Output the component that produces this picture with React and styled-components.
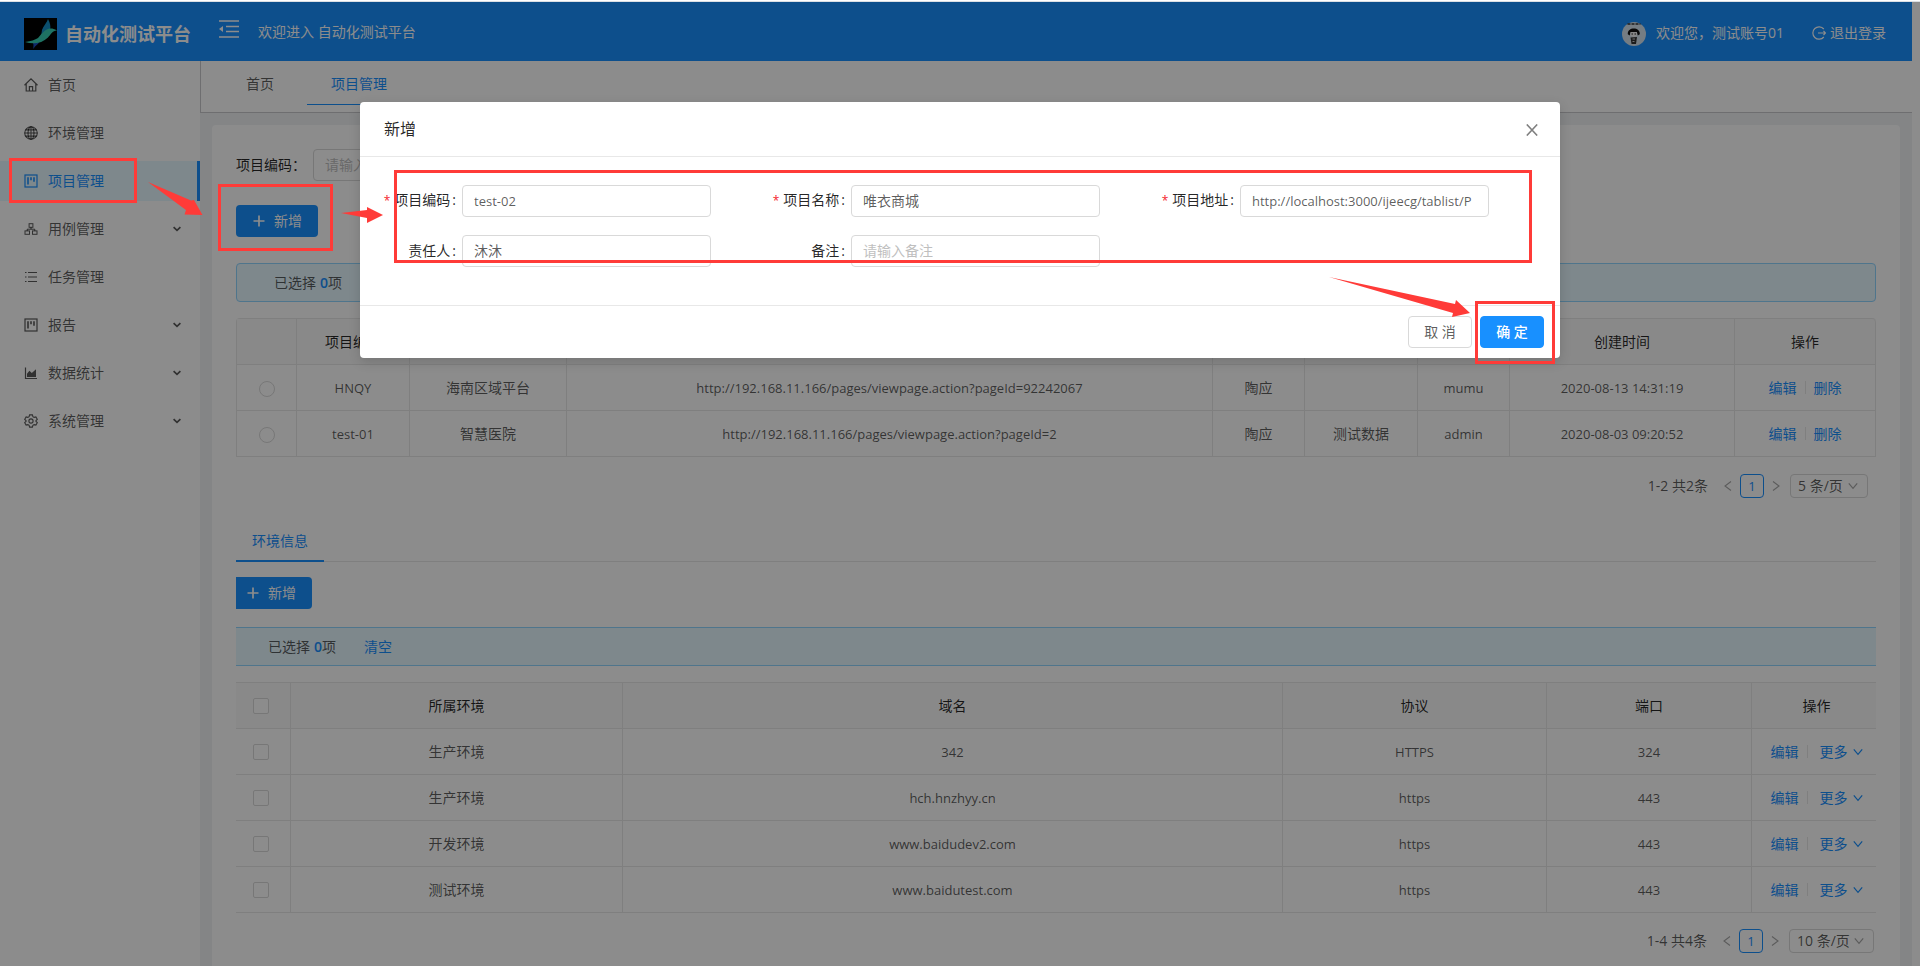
import React from "react";
import styled, { createGlobalStyle, css } from "styled-components";

const Global = createGlobalStyle`
  * { box-sizing: border-box; }
  body {
    margin: 0;
    font-family: "Open Sans", "Noto Sans CJK SC", sans-serif;
    font-size: 14px;
    line-height: 22px;
    color: rgba(0, 0, 0, 0.65);
    background: #fff;
  }
  button, input, select { font: inherit; color: inherit; margin: 0; }
  a { color: #1890ff; text-decoration: none; }
`;

const Root = styled.div`
  height: 100vh;
  overflow: hidden;
  display: flex;
  flex-direction: column;
`;
const TopEdge = styled.div`
  flex: none;
  height: 2px;
  background: #fff;
  border-bottom: 1px solid #dcdfe3;
`;
const Page = styled.div`
  position: relative;
  flex: 1;
  min-height: 0;
  padding-right: 8px;
  display: flex;
  flex-direction: column;
`;
const Mask = styled.div`
  position: absolute;
  inset: 0;
  background: rgba(0, 0, 0, 0.45);
`;

const Header = styled.header`
  flex: none;
  height: 59px;
  display: flex;
  align-items: center;
  padding: 4px 26px 0 24px;
  background: #1890ff;
  color: #fff;
`;
const Brand = styled.h1`
  margin: 0 28px 0 8px;
  font-size: 18px;
  line-height: 32px;
  font-weight: 700;
`;
const FoldButton = styled.button`
  border: 0;
  padding: 0;
  background: none;
  height: 30px;
  display: flex;
  align-items: flex-start;
`;
const Welcome = styled.span`
  flex: 1;
  margin-left: 19px;
  padding-bottom: 4px;
`;
const Account = styled.span`
  display: flex;
  align-items: center;
  gap: 10px;
  margin-right: 28px;
`;
const HeaderText = styled.span`
  padding-bottom: 2px;
`;
const Logout = styled.a`
  display: flex;
  align-items: center;
  gap: 4px;
  padding-bottom: 2px;
  color: #fff;
`;

const Columns = styled.div`
  flex: 1;
  min-height: 0;
  display: flex;
`;
const Sidebar = styled.nav`
  flex: none;
  width: 200px;
  background: #fff;
  padding-top: 4px;
  display: flex;
  flex-direction: column;
  gap: 8px;
`;
const NavItem = styled.a`
  height: 40px;
  display: flex;
  align-items: center;
  padding: 0 16px 0 24px;
  border-right: 3px solid transparent;
  color: rgba(0, 0, 0, 0.65);
  ${(p) => p.$active && css`
    color: #1890ff;
    background: #e6f7ff;
    border-right-color: #1890ff;
  `}
  svg { flex: none; }
`;
const NavText = styled.span`
  flex: 1;
  margin-left: 10px;
`;

const Main = styled.main`
  flex: 1;
  min-width: 0;
  display: flex;
  flex-direction: column;
  background: #f0f2f5;
`;
const PageTabs = styled.div`
  flex: none;
  height: 52px;
  display: flex;
  gap: 9px;
  padding-left: 21px;
  background: #fff;
  border-left: 1px solid #c8c8cc;
  border-bottom: 1px solid #c8c8cc;
`;
const PageTab = styled.a`
  height: 44px;
  padding: 12px 24px 0;
  color: ${(p) => (p.$active ? "#1890ff" : "rgba(0,0,0,.65)")};
  border-bottom: 1px solid ${(p) => (p.$active ? "#1890ff" : "transparent")};
`;
const Card = styled.section`
  flex: 1;
  margin: 12px 12px 0;
  padding: 24px 24px 0;
  background: #fff;
  border-radius: 4px 4px 0 0;
`;
const SearchRow = styled.div`
  display: flex;
  align-items: center;
  gap: 7px;
  margin-bottom: 24px;
  color: rgba(0, 0, 0, 0.85);
`;
const TextInput = styled.input`
  width: 249px;
  height: 32px;
  padding: 3px 11px 5px;
  border: 1px solid #d9d9d9;
  border-radius: 4px;
  background: #fff;
  color: rgba(0, 0, 0, 0.65);
  outline: none;
  &::placeholder { color: #bfbfbf; }
  ${(p) => p.$latin && css`
    padding: 4px 11px;
    font-size: 13px;
  `}
`;
const AddButton = styled.button`
  display: flex;
  align-items: center;
  gap: 8px;
  height: 32px;
  padding: 0 16px;
  padding-left: ${(p) => (p.$flush ? 10 : 16)}px;
  border: 0;
  border-radius: ${(p) => (p.$flush ? "0 4px 4px 0" : "4px")};
  background: #1890ff;
  color: #fff;
`;
const Notice = styled.div`
  height: 39px;
  display: flex;
  align-items: center;
  margin: ${(p) => (p.$flush ? 18 : 26)}px 0 16px;
  padding-left: ${(p) => (p.$flush ? 32 : 37)}px;
  background: #e6f7ff;
  border: 1px solid #91d5ff;
  border-radius: 4px;
  ${(p) => p.$flush && css`
    border-width: 1px 0;
    border-radius: 0;
  `}
  a { margin-left: 28px; }
`;
const Count = styled.b`
  font-weight: 600;
  color: #1890ff;
  margin-left: 4px;
`;

const DataTable = styled.table`
  width: 100%;
  table-layout: fixed;
  border-collapse: separate;
  border-spacing: 0;
  border: solid #e8e8e8;
  border-width: ${(p) => (p.$flush ? "1px 0 0 0" : "1px 0 0 1px")};
  border-radius: ${(p) => (p.$flush ? 0 : "4px 4px 0 0")};
  text-align: center;
  th, td {
    height: 46px;
    padding: 0;
    border: solid #e8e8e8;
    border-width: 0 1px 1px 0;
    font-weight: 400;
    vertical-align: middle;
  }
  th {
    background: #fafafa;
    color: rgba(0, 0, 0, 0.85);
  }
  ${(p) => p.$flush
    ? css`
      tr > :first-child { padding-right: 4px; }
      tr > :last-child { padding-left: 5px; border-right-width: 0; }
    `
    : css`th:last-child { border-top-right-radius: 4px; }`}
`;
const Latin = styled.span`
  font-size: 13px;
`;
const Radio = styled.input.attrs({ type: "radio" })`
  appearance: none;
  display: block;
  width: 16px;
  height: 16px;
  margin: 2px auto 0 !important;
  border: 1px solid #d9d9d9;
  border-radius: 50%;
  background: #fff;
`;
const Checkbox = styled.input.attrs({ type: "checkbox" })`
  appearance: none;
  display: block;
  width: 16px;
  height: 16px;
  margin: 0 auto !important;
  border: 1px solid #d9d9d9;
  border-radius: 2px;
  background: #fff;
`;
const Actions = styled.div`
  display: flex;
  align-items: center;
  justify-content: center;
`;
const Divider = styled.span`
  width: 1px;
  height: 13px;
  margin: 0 ${(p) => (p.$wide ? 12 : 8)}px 0 8px;
  background: #e8e8e8;
`;
const MoreLink = styled.a`
  display: flex;
  align-items: center;
  gap: 5px;
`;

const Pager = styled.div`
  display: flex;
  align-items: center;
  justify-content: flex-end;
  margin-top: ${(p) => (p.$flush ? 16 : 17)}px;
  padding-right: ${(p) => (p.$flush ? 2 : 8)}px;
  height: 24px;
`;
const PageArrow = styled.button`
  width: 24px;
  height: 24px;
  padding: 0;
  border: 0;
  background: none;
  color: rgba(0, 0, 0, 0.35);
  display: grid;
  place-items: center;
`;
const PagerTotal = styled.span`
  margin-right: 8px;
`;
const PageNumber = styled.button`
  width: 24px;
  height: 24px;
  padding: 0;
  border: 1px solid #1890ff;
  border-radius: 4px;
  background: #fff;
  color: #1890ff;
`;
const SizePicker = styled.label`
  display: flex;
  align-items: center;
  width: ${(p) => (p.$wide ? 85 : 78)}px;
  height: 24px;
  margin-left: 2px;
  padding: 0 9px 0 7px;
  border: 1px solid #d9d9d9;
  border-radius: 4px;
  color: rgba(0, 0, 0, 0.35);
  select {
    flex: 1;
    min-width: 0;
    appearance: none;
    border: 0;
    padding: 0;
    background: none;
    color: rgba(0, 0, 0, 0.65);
  }
`;
const SubTabs = styled.div`
  height: 42px;
  margin: 22px 0 15px;
  display: flex;
  border-bottom: 1px solid #e8e8e8;
`;
const SubTab = styled.a`
  height: 42px;
  padding: 10px 16px 0;
  border-bottom: 2px solid #1890ff;
`;

const Overlay = styled.div`
  position: absolute;
  inset: 100px 0 auto;
  display: flex;
  justify-content: center;
`;
const Modal = styled.div`
  position: relative;
  width: 1200px;
  background: #fff;
  border-radius: 4px;
  box-shadow: 0 4px 12px rgba(0, 0, 0, 0.15);
`;
const ModalHead = styled.div`
  height: 55px;
  display: flex;
  align-items: center;
  justify-content: space-between;
  padding: 0 22px 0 24px;
  border-bottom: 1px solid #e8e8e8;
  h2 {
    margin: 0;
    font-size: 16px;
    line-height: 22px;
    font-weight: 400;
    color: rgba(0, 0, 0, 0.85);
  }
`;
const CloseButton = styled.button`
  border: 0;
  padding: 2px 0 0;
  background: none;
  display: flex;
  color: rgba(0, 0, 0, 0.5);
`;
const Form = styled.form`
  display: grid;
  grid-template-columns: repeat(3, 1fr);
  row-gap: 18px;
  padding: 28px 21px 38px 12px;
`;
const Field = styled.label`
  display: flex;
  align-items: center;
  color: rgba(0, 0, 0, 0.85);
`;
const FieldName = styled.span`
  width: 90px;
  padding: 0 6px 1px 0;
  text-align: right;
  white-space: nowrap;
  &::after { content: ":"; margin-left: 2px; }
`;
const Star = styled.span`
  margin-right: 4px;
  font-size: 12px;
  color: #f5222d;
`;
const ModalFoot = styled.div`
  display: flex;
  justify-content: flex-end;
  gap: 8px;
  padding: 10px 16px;
  border-top: 1px solid #e8e8e8;
`;
const FootButton = styled.button`
  width: 64px;
  height: 32px;
  padding: 0;
  border: 1px solid ${(p) => (p.$primary ? "#1890ff" : "#d9d9d9")};
  border-radius: 4px;
  background: ${(p) => (p.$primary ? "#1890ff" : "#fff")};
  color: ${(p) => (p.$primary ? "#fff" : "rgba(0,0,0,.65)")};
  font-weight: ${(p) => (p.$primary ? 500 : 400)};
`;
const Notes = styled.svg`
  position: absolute;
  left: 0;
  top: 0;
  overflow: visible;
  pointer-events: none;
`;

const Icon = ({ size = 14, sw = 1.2, children }) => (
  <svg width={size} height={size} viewBox="0 0 14 14" fill="none" stroke="currentColor" strokeWidth={sw}>{children}</svg>
);
const icons = {
  home: <Icon><path d="M.5 7.300 7 .9l6.500 6.400M2.200 6V13h9.600V6M5.400 13V8.700h3.200V13" /></Icon>,
  globe: <Icon sw={1.1}><circle cx="7" cy="7" r="6.300" /><ellipse cx="7" cy="7" rx="3" ry="6.300" /><path d="M7 .7v12.600M.7 7h12.600M1.500 3.900h11M1.500 10.100h11" /></Icon>,
  project: <Icon><rect x="1" y="1" width="12" height="12" /><path d="M4 3.300v7.200M7 3.300v3M10 3.300v4.400" strokeWidth="1.600" /></Icon>,
  cluster: <Icon sw={1}><rect x="5.100" y="1.700" width="3.800" height="3.600" /><rect x="1" y="8.900" width="4.500" height="3.400" /><rect x="8.500" y="8.900" width="4.500" height="3.400" /><path d="M7 5.300v1.900M3.200 8.900V7.200h7.600v1.700" /></Icon>,
  list: <Icon sw={1.1}><path d="M4 2.500h9M4 7h9M4 11.500h9M1 2.500h1.500M1 7h1.500M1 11.500h1.500" /></Icon>,
  chart: <Icon><path d="M1.500 1.500v11H13" /><path d="M3 11V7.800l2.400-3 2.400 2.200L12 3.300V11z" fill="currentColor" stroke="none" /></Icon>,
  gear: <Icon sw={1.1}><path d="M5.600.9h2.800l.5 1.800 1.200.7 1.800-.5 1.400 2.400L12 6.600v.8l1.300 1.300-1.400 2.400-1.800-.5-1.200.7-.5 1.800H5.600l-.5-1.800-1.200-.7-1.800.5L.7 8.700 2 7.400v-.8L.7 5.300l1.400-2.400 1.800.5 1.200-.7z" /><circle cx="7" cy="7" r="2.100" /></Icon>,
};
const Chevron = () => (
  <svg width="10" height="10" viewBox="0 0 10 10" fill="none" stroke="currentColor" strokeWidth="1.200"><path d="M.8 2.400 5 7.400l4.200-5" /></svg>
);
const NavChevron = () => (
  <svg width="8" height="8" viewBox="0 0 8 8" fill="none" stroke="currentColor" strokeWidth="1.700"><path d="m.6 2.200 3.400 3.200 3.400-3.200" /></svg>
);
const Plus = () => (
  <svg width="14" height="14" viewBox="0 0 14 14" fill="none" stroke="currentColor" strokeWidth="1.700"><path d="M7 1.500v11M1.500 7h11" /></svg>
);
const Side = ({ right }) => (
  <svg width="8" height="12" viewBox="0 0 8 12" fill="none" stroke="currentColor" strokeWidth="1.100"><path d={right ? "m1 1.500 6 4.500-6 4.500" : "M7 1.500 1 6l6 4.500"} /></svg>
);
const Logo = () => (
  <svg width="33" height="32" viewBox="0 0 33 32">
    <rect width="33" height="32" fill="#000" />
    <path d="M24 1c-1 4-5 7-6 11-.4 2-.4 4-1 6l9-6c1-4 0-7-2-11z" fill="#1590c8" />
    <path d="M9 25c1 2 0 4 .5 6 1-3 4-4 6-7z" fill="#1d4fc0" />
    <path d="M1 24c6-1 10-2 13-4 3-3 5-7 10-9 3-.8 5-.6 9 1.500-5 0-6 4-9 7-6 6-15 7-23 4.500z" fill="#38d0b4" />
  </svg>
);
const Avatar = () => (
  <svg width="24" height="24" viewBox="0 0 24 24">
    <circle cx="12" cy="12" r="12" fill="#d5e4ee" />
    <path d="M5.500 2h13" stroke="#333" strokeWidth="1.600" strokeDasharray="3 1" />
    <path d="M5.800 12.300C5 4.500 18.500 4.500 17.800 12.300l-2 1.200-.8-3H8.500l-.8 3z" fill="#111" />
    <path d="M8.500 10h6.500v3.500l-3 1.800-3.500-1.800z" fill="#f4f4f4" />
    <path d="M9.500 12h1.500M12.500 12h1.500" stroke="#222" />
    <path d="M8.500 15.500l6.500-.5-1 7H9.500z" fill="#333" />
    <path d="M10.500 17h2.500M10.500 19.500h2" stroke="#ccc" />
  </svg>
);

const NAV = [
  ["home", "首页"],
  ["globe", "环境管理"],
  ["project", "项目管理"],
  ["cluster", "用例管理", true],
  ["list", "任务管理"],
  ["project", "报告", true],
  ["chart", "数据统计", true],
  ["gear", "系统管理", true],
];
const PROJECT_COLS = ["项目编码", "项目名称", "项目地址", "责任人", "备注", "", "创建时间"];
const PROJECT_WIDTHS = [60, 113, 157, null, 92, 113, 92, 225, 141];
const PROJECTS = [
  ["HNQY", "海南区域平台", "http://192.168.11.166/pages/viewpage.action?pageId=92242067", "陶应", "", "mumu", "2020-08-13 14:31:19"],
  ["test-01", "智慧医院", "http://192.168.11.166/pages/viewpage.action?pageId=2", "陶应", "测试数据", "admin", "2020-08-03 09:20:52"],
];
const ENV_COLS = ["所属环境", "域名", "协议", "端口"];
const ENV_WIDTHS = [55, 332, null, 264, 205, 124];
const ENVS = [
  ["生产环境", "342", "HTTPS", "324"],
  ["生产环境", "hch.hnzhyy.cn", "https", "443"],
  ["开发环境", "www.baidudev2.com", "https", "443"],
  ["测试环境", "www.baidutest.com", "https", "443"],
];
const FIELDS = [
  ["项目编码", "test-02", "", true],
  ["项目名称", "唯衣商城", "", true],
  ["项目地址", "http://localhost:3000/ijeecg/tablist/P", "", true],
  ["责任人", "沐沐", ""],
  ["备注", "", "请输入备注"],
];

const isLatin = (s) => /^[\x20-\x7e]+$/.test(s);
const Value = ({ children }) => (isLatin(children) ? <Latin>{children}</Latin> : children);
const Cols = ({ widths }) => (
  <colgroup>{widths.map((w, i) => <col key={i} width={w || undefined} />)}</colgroup>
);

function Pagination({ total, size, flush }) {
  return (
    <Pager $flush={flush}>
      <PagerTotal>{total}</PagerTotal>
      <PageArrow aria-label="上一页"><Side /></PageArrow>
      <PageNumber><Latin>1</Latin></PageNumber>
      <PageArrow aria-label="下一页"><Side right /></PageArrow>
      <SizePicker $wide={flush}>
        <select aria-label="每页条数"><option>{size}</option></select>
        <Chevron />
      </SizePicker>
    </Pager>
  );
}

export default function App() {
  return (
    <Root>
      <Global />
      <TopEdge />
      <Page>
        <Header>
          <Logo />
          <Brand>自动化测试平台</Brand>
          <FoldButton aria-label="收起菜单">
            <svg width="20" height="20" viewBox="0 0 20 20" stroke="currentColor" strokeWidth="1.600">
              <path d="M0 2h20M7 7.500h13M7 12.500h13M0 18h20" />
              <path d="M0 10l4-3v6z" fill="currentColor" stroke="none" />
            </svg>
          </FoldButton>
          <Welcome>欢迎进入 自动化测试平台</Welcome>
          <Account><Avatar /><HeaderText>欢迎您，测试账号01</HeaderText></Account>
          <Logout href="#logout">
            <Icon sw={1.2}><path d="M11.800 3A6.200 6.200 0 1 0 11.800 11M6 7h7.500M11.500 5l2 2-2 2" /></Icon>
            退出登录
          </Logout>
        </Header>
        <Columns>
          <Sidebar>
            {NAV.map(([icon, text, more], i) => (
              <NavItem key={text} href="#nav" $active={i === 2}>
                {icons[icon]}
                <NavText>{text}</NavText>
                {more && <NavChevron />}
              </NavItem>
            ))}
          </Sidebar>
          <Main>
            <PageTabs>
              <PageTab href="#home">首页</PageTab>
              <PageTab href="#project" $active>项目管理</PageTab>
            </PageTabs>
            <Card>
              <SearchRow>
                <label htmlFor="search">项目编码：</label>
                <TextInput id="search" placeholder="请输入项目编码" />
              </SearchRow>
              <AddButton><Plus />新增</AddButton>
              <Notice>已选择 <Count>0</Count>项</Notice>
              <DataTable>
                <Cols widths={PROJECT_WIDTHS} />
                <thead>
                  <tr><th />{PROJECT_COLS.map((c) => <th key={c}>{c}</th>)}<th>操作</th></tr>
                </thead>
                <tbody>
                  {PROJECTS.map((row) => (
                    <tr key={row[0]}>
                      <td><Radio name="project" aria-label={row[0]} /></td>
                      {row.map((v, i) => <td key={i}><Value>{v}</Value></td>)}
                      <td><Actions><a href="#edit">编辑</a><Divider /><a href="#delete">删除</a></Actions></td>
                    </tr>
                  ))}
                </tbody>
              </DataTable>
              <Pagination total="1-2 共2条" size="5 条/页" />
              <SubTabs><SubTab href="#env">环境信息</SubTab></SubTabs>
              <AddButton $flush><Plus />新增</AddButton>
              <Notice $flush>已选择 <Count>0</Count>项<a href="#clear">清空</a></Notice>
              <DataTable $flush>
                <Cols widths={ENV_WIDTHS} />
                <thead>
                  <tr><th><Checkbox aria-label="全选" /></th>{ENV_COLS.map((c) => <th key={c}>{c}</th>)}<th>操作</th></tr>
                </thead>
                <tbody>
                  {ENVS.map((row) => (
                    <tr key={row[1]}>
                      <td><Checkbox aria-label={row[1]} /></td>
                      {row.map((v, i) => <td key={i}><Value>{v}</Value></td>)}
                      <td>
                        <Actions><a href="#edit">编辑</a><Divider $wide /><MoreLink href="#more">更多<Chevron /></MoreLink></Actions>
                      </td>
                    </tr>
                  ))}
                </tbody>
              </DataTable>
              <Pagination total="1-4 共4条" size="10 条/页" flush />
            </Card>
          </Main>
        </Columns>
        <Mask />
        <Notes width="340" height="260" fill="none">
          <g stroke="#ff3b38" strokeWidth="3">
            <rect x="10.500" y="157.500" width="125" height="42" />
            <rect x="219.500" y="183.500" width="112" height="64" />
          </g>
          <path d="M148 180l43 18.500 3-.5 8.500 15-18-.5 1.500-4.500z" fill="#ff3b38" />
        </Notes>
        <Overlay>
          <Modal role="dialog" aria-label="新增">
            <ModalHead>
              <h2>新增</h2>
              <CloseButton aria-label="关闭">
                <svg width="12" height="12" viewBox="0 0 12 12" stroke="currentColor" strokeWidth="1.500"><path d="m.8.4 10.400 11.200M11.200.4.8 11.600" /></svg>
              </CloseButton>
            </ModalHead>
            <Form>
              {FIELDS.map(([name, value, hint, required]) => (
                <Field key={name}>
                  <FieldName>{required && <Star>*</Star>}{name}</FieldName>
                  <TextInput defaultValue={value} placeholder={hint} $latin={isLatin(value)} />
                </Field>
              ))}
            </Form>
            <ModalFoot>
              <FootButton>取 消</FootButton>
              <FootButton $primary>确 定</FootButton>
            </ModalFoot>
            <Notes width="1200" height="256" fill="none">
              <g stroke="#ff3b38" strokeWidth="3">
                <rect x="35.500" y="69.500" width="1135" height="90" />
                <rect x="1116.500" y="200.500" width="77" height="60" />
              </g>
              <path d="M-19 111l26-3 0-3 16 8-16 8 0-5zM969 175l126 27 1-4 14 13-18 4 1-4z" fill="#ff3b38" />
            </Notes>
          </Modal>
        </Overlay>
      </Page>
    </Root>
  );
}
